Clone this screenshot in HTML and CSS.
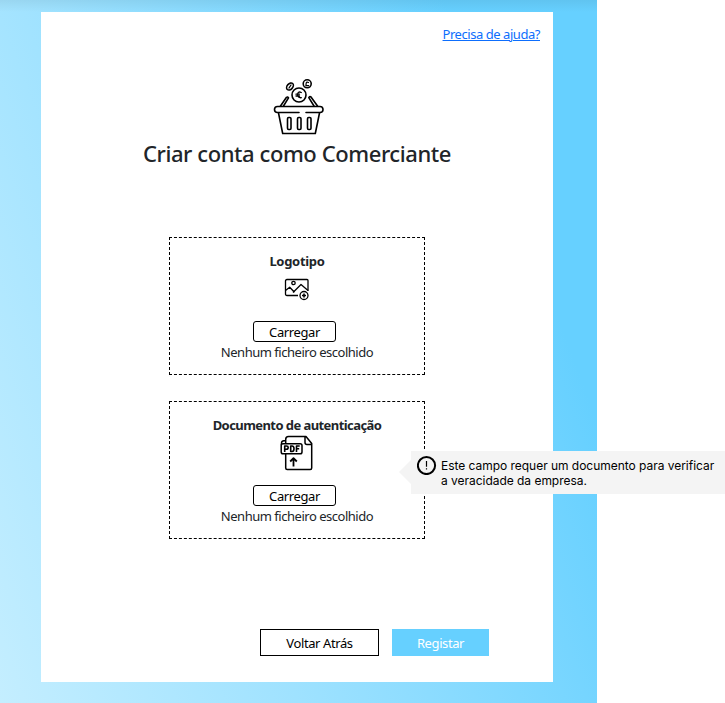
FILE: index.html
```html
<!DOCTYPE html>
<html lang="pt">
<head>
<meta charset="utf-8">
<title>Criar conta como Comerciante</title>
<link rel="stylesheet" href="styles.css">
</head>
<body>
<div class="page">
  <main class="card">
    <a class="help" href="#">Precisa de ajuda?</a>
    <svg class="basket" width="52" height="58" viewBox="0 0 52 58" fill="none" stroke="#000" stroke-width="1.6" stroke-linejoin="round" stroke-linecap="round">
      <circle cx="26" cy="17" r="7"/>
      <path d="M28.300 14.500q-3.600-1.600-3.600 2t3.600 3.200M23 16.200h3.500M23 18h3.500" stroke-width="1.300"/>
      <ellipse cx="17" cy="8.500" rx="2.800" ry="4" transform="rotate(42 17 8.500)"/>
      <path d="M16 10l2-3" stroke-width="1.300"/>
      <circle cx="34.200" cy="5.800" r="4"/>
      <path d="M35.500 4.500q-2-1-2.300.6l-.3 2.600h2.800" stroke-width="1.200"/>
      <path d="M7.500 28l6-8.700q1.300-.9 2 .6L10.500 28M44.500 28l-6.500-9q-1.200-.8-2.200.6l5.200 8.400"/>
      <path d="M26 34.500H4.500a3 3 0 0 1 0-6h42.500a3 3 0 0 1 0 6H33"/>
      <path d="M5.500 35l4.200 20.500h32.600L46.500 35"/>
      <rect x="14.500" y="39.500" width="3.500" height="12" rx="1.200"/>
      <rect x="24.500" y="39.500" width="3.500" height="12" rx="1.200"/>
      <rect x="34.500" y="39.500" width="3.500" height="12" rx="1.200"/>
    </svg>
    <h1 class="title"><span>Criar conta como Comerciante</span></h1>

    <section class="upload">
      <h2 class="label logo-label">Logotipo</h2>
      <div class="icon">
        <svg width="26" height="24" viewBox="0 0 26 24" fill="none" stroke="#000" stroke-width="1.300" stroke-linejoin="round">
          <path d="M14 18.500H3q-1.500 0-1.500-1.500V4q0-1.500 1.500-1.500h20q1 0 1 1v10.500"/>
          <circle cx="9.500" cy="6" r="1.700"/>
          <path d="M1.500 13.500l4.200-3.300 4.800 5M9 15.500l8-8 7 6"/>
          <circle cx="20" cy="18.500" r="4"/>
          <path d="M18 18.500h4M20 16.500v4" stroke-width="1.600"/>
        </svg>
      </div>
      <button class="pick">Carregar</button>
      <p class="status">Nenhum ficheiro escolhido</p>
    </section>

    <section class="upload">
      <h2 class="label doc-label">Documento de autenticação</h2>
      <div class="icon icon-pdf">
        <svg width="34" height="36" viewBox="0 0 34 36" fill="none" stroke="#000" stroke-width="1.500" stroke-linejoin="round">
          <path d="M5.700 18.500V33q0 1.500 1.500 1.500h23q1.500 0 1.500-1.500V8.500L26 1.500H8.500Q5.700 1.500 5.700 4.500V9M25 1.500v6q0 2 2 2h5M1.500 10V8q0-2.500 4.200-2.500"/>
          <rect x="1.200" y="8.800" width="20.800" height="10" rx="1.800" fill="#fff"/>
          <path d="M4.700 17v-6h1.800q1.700 0 1.700 1.600T6.500 14.200H4.700M10.700 11v5.500h1.300q2 0 2-2.750T12 11zM19.700 11h-3.200v6M16.500 13.800h2.700" stroke-width="1.600"/>
          <path d="M13.500 31.500v-8M10.200 26.500l3.300-3.300 3.300 3.300" stroke-width="1.800"/>
        </svg>
      </div>
      <button class="pick">Carregar</button>
      <p class="status">Nenhum ficheiro escolhido</p>
      <div class="tip" role="tooltip">
        <svg class="tip-icon" width="20" height="20" viewBox="0 0 20 20" fill="none" stroke="#000">
          <circle cx="9.500" cy="10.500" r="8.600" stroke-width="2"/>
          <path d="M9.500 6v5.800M9.500 13.200v1.300" stroke-width="1.200"/>
        </svg>
        <span>Este campo requer um documento para verificar<br>a veracidade da empresa.</span>
      </div>
    </section>

    <div class="actions">
      <button class="btn back">Voltar Atrás</button>
      <button class="btn submit">Registar</button>
    </div>
  </main>
</div>
</body>
</html>
```
FILE: styles.css
```css
* { box-sizing: border-box; }
body {
  margin: 0;
  background: #fff;
  color: #212529;
  font: 13px/20px "Noto Sans", "Open Sans", sans-serif;
}
.page {
  width: 597px;
  height: 703px;
  padding: 12px 44px 21px 41px;
  background:
    linear-gradient(rgba(0, 0, 0, .06), transparent 12px),
    linear-gradient(70deg, #c4eeff 0%, #9fe2ff 35%, #66d0ff 82%);
}
.card {
  display: flex;
  flex-direction: column;
  align-items: center;
  width: 512px;
  height: 670px;
  padding: 12px 13px 0;
  background: #fff;
}
.help {
  align-self: flex-end;
  color: #0d6efd;
  letter-spacing: -.45px;
}
.basket { display: block; margin: 34px 0 0 4px; }
.title {
  margin: 3px 0 2px;
  font-size: 22px;
  font-weight: 500;
  line-height: 28px;
  letter-spacing: -.42px;
  white-space: nowrap;
}
.upload {
  position: relative;
  display: flex;
  flex-direction: column;
  align-items: center;
  flex: none;
  width: 256px;
  height: 138px;
  margin-top: 26px;
  padding-top: 13px;
  border: 1px dashed #000;
}
.title + .upload { margin-top: 68px; }
.label {
  margin: 0;
  font-size: 13px;
  font-weight: 700;
  line-height: 20px;
  letter-spacing: -.3px;
}
.doc-label { letter-spacing: -.57px; }
.icon { height: 50px; padding-top: 6px; }
.icon-pdf { padding-top: 0; }
.icon svg { display: block; }
.pick {
  width: 83px;
  height: 21px;
  margin-right: 5px;
  padding: 0;
  background: #fff;
  border: 1px solid #000;
  border-radius: 3px;
  color: #000;
  font: inherit;
  line-height: 20px;
  letter-spacing: -.4px;
}
.status { margin: 0; letter-spacing: -.48px; white-space: nowrap; }
.tip {
  position: absolute;
  top: 49px;
  left: 241px;
  display: flex;
  gap: 4px;
  width: 315px;
  height: 43px;
  padding: 7px 0 0 6px;
  background: #f4f4f4;
  color: #000;
  font: 12px/15px Inter, sans-serif;
  letter-spacing: -.03px;
  white-space: nowrap;
}
.tip::before {
  content: "";
  position: absolute;
  top: 9px;
  left: -12px;
  border: 12px solid transparent;
  border-right-color: #f4f4f4;
  border-left: 0;
}
.tip-icon { flex: none; margin-top: -3px; }
.actions {
  display: flex;
  align-self: flex-end;
  gap: 13px;
  margin: 90px 51px 0 0;
}
.btn {
  height: 27px;
  padding: 0;
  border: 1px solid #000;
  background: #fff;
  color: #000;
  font: inherit;
  letter-spacing: -.4px;
}
.back { width: 119px; }
.submit { width: 97px; background: #66d0ff; border-color: #66d0ff; color: #fff; }
```
